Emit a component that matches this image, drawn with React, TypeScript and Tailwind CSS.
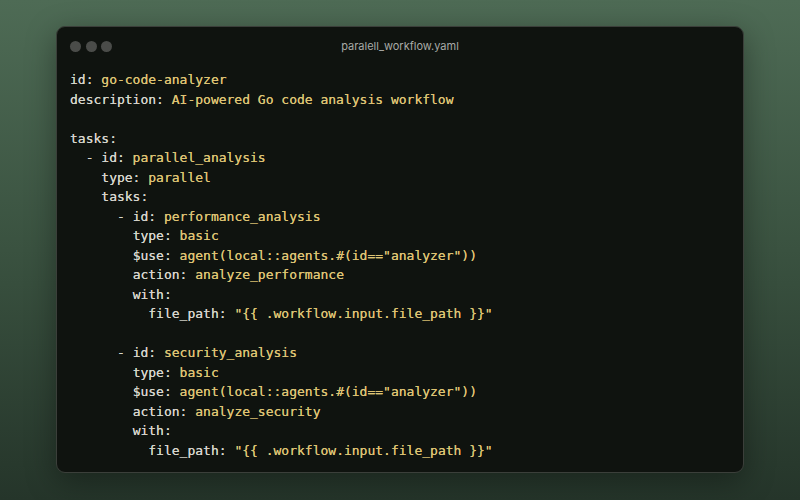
const lines: [string, string, string?][] = [
  ['', 'id:', ' go-code-analyzer'],
  ['', 'description:', ' AI-powered Go code analysis workflow'],
  ['', '', ''],
  ['', 'tasks:', ''],
  ['  - ', 'id:', ' parallel_analysis'],
  ['    ', 'type:', ' parallel'],
  ['    ', 'tasks:', ''],
  ['      - ', 'id:', ' performance_analysis'],
  ['        ', 'type:', ' basic'],
  ['        ', '$use:', ' agent(local::agents.#(id=="analyzer"))'],
  ['        ', 'action:', ' analyze_performance'],
  ['        ', 'with:', ''],
  ['          ', 'file_path:', ' "{{ .workflow.input.file_path }}"'],
  ['', '', ''],
  ['      - ', 'id:', ' security_analysis'],
  ['        ', 'type:', ' basic'],
  ['        ', '$use:', ' agent(local::agents.#(id=="analyzer"))'],
  ['        ', 'action:', ' analyze_security'],
  ['        ', 'with:', ''],
  ['          ', 'file_path:', ' "{{ .workflow.input.file_path }}"'],
]

export default function App() {
  return (
    <div className="w-[800px] h-[500px] flex items-start justify-center pt-[26px] bg-gradient-to-b from-[#4e6b55] via-[#3a5240] to-[#25352a]">
      <div className="w-[688px] h-[447px] rounded-[9px] border border-[#3b3f3a] bg-[#0f130f] shadow-[0_8px_30px_rgba(0,0,0,0.35)] overflow-hidden">
        <div className="relative h-[38px] flex items-center px-[13px]">
          <div className="flex gap-[4.5px]">
            <span className="w-[11px] h-[11px] rounded-full bg-[#4a4c49]" />
            <span className="w-[11px] h-[11px] rounded-full bg-[#4a4c49]" />
            <span className="w-[11px] h-[11px] rounded-full bg-[#4a4c49]" />
          </div>
          <p className="absolute inset-x-0 text-center text-[11px] text-[#a8aaa6] font-['Inter','Liberation_Sans',sans-serif]">
            paralell_workflow.yaml
          </p>
        </div>
        <pre className="px-[13px] pt-[5px] text-[13px] leading-[19.5px] font-['DejaVu_Sans_Mono','Liberation_Mono',monospace] [text-shadow:0_0_0.4px_currentColor]">
          {lines.map(([indent, key, value], i) => (
            <div key={i} className="h-[19.5px] whitespace-pre">
              <span className="text-[#d6d5cc]">{indent}{key}</span>
              <span className="text-[#dec373]">{value}</span>
            </div>
          ))}
        </pre>
      </div>
    </div>
  )
}
